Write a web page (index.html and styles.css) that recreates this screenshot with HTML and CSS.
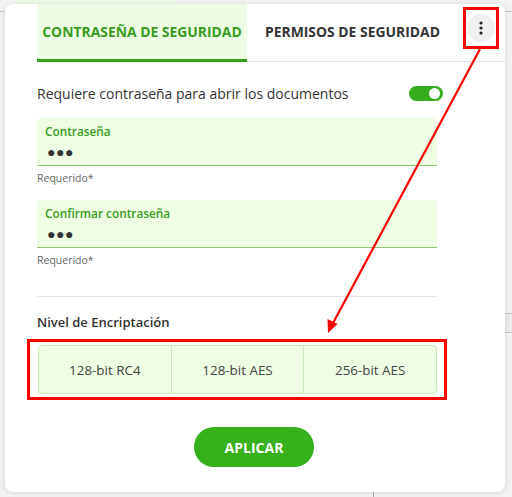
FILE: index.html
```html
<!DOCTYPE html>
<html lang="es">
<head>
    <meta charset="UTF-8">
    <meta name="viewport" content="width=device-width, initial-scale=1.0">
    <title>Seguridad del documento</title>
    <link rel="stylesheet" href="styles.css">
</head>
<body>
    <div class="backdrop">
        <div class="bg-chip"></div>
        <div class="bg-line bg-line-left"></div>
        <div class="bg-line bg-line-right"></div>
        <div class="bg-band"></div>
        <div class="bg-tick"></div>
    </div>

    <div class="card">
        <div class="tabs">
            <div class="tab active">CONTRASEÑA DE SEGURIDAD</div>
            <div class="tab">PERMISOS DE SEGURIDAD</div>
            <div class="menu-wrap">
                <button class="menu-btn" aria-label="Más opciones">
                    <svg width="4" height="14" viewBox="0 0 4 14">
                        <circle cx="2" cy="2" r="1.6" fill="#222"/>
                        <circle cx="2" cy="7" r="1.6" fill="#222"/>
                        <circle cx="2" cy="12" r="1.6" fill="#222"/>
                    </svg>
                </button>
            </div>
        </div>

        <div class="content">
            <div class="switch-row">
                <span>Requiere contraseña para abrir los documentos</span>
                <div class="switch"><div class="knob"></div></div>
            </div>

            <div class="field">
                <div class="field-box">
                    <div class="field-label">Contraseña</div>
                    <div class="field-value">●●●</div>
                </div>
                <div class="field-hint">Requerido*</div>
            </div>

            <div class="field">
                <div class="field-box">
                    <div class="field-label">Confirmar contraseña</div>
                    <div class="field-value">●●●</div>
                </div>
                <div class="field-hint">Requerido*</div>
            </div>

            <hr class="divider">

            <h3>Nivel de Encriptación</h3>
            <div class="segments-wrap">
                <div class="segments">
                    <div class="segment">128-bit RC4</div>
                    <div class="segment">128-bit AES</div>
                    <div class="segment">256-bit AES</div>
                </div>
            </div>

            <div class="actions">
                <button class="apply">APLICAR</button>
            </div>
        </div>
    </div>

    <!-- annotation arrow -->
    <svg class="annotation" width="512" height="497" viewBox="0 0 512 497">
        <line x1="480" y1="49" x2="332" y2="325" stroke="#ff0000" stroke-width="2.2"/>
        <polygon points="328,333 327.5,319 337.5,324" fill="#ff0000"/>
    </svg>
</body>
</html>
```

FILE: styles.css
```css
* {
    margin: 0;
    padding: 0;
    box-sizing: border-box;
}

body {
    font-family: 'Open Sans', 'Noto Sans', sans-serif;
    background-color: #f3f3f3;
    color: #333;
    width: 512px;
    height: 497px;
    overflow: hidden;
    position: relative;
}

/* Background page behind the dialog */
.backdrop {
    position: absolute;
    inset: 0;
}

.bg-chip {
    position: absolute;
    left: 14px;
    top: -12px;
    width: 162px;
    height: 17px;
    border-radius: 8px;
    background: #eefbe6;
}

.bg-line {
    position: absolute;
    height: 1px;
    background: #c4c4c4;
}

.bg-line-left {
    left: 0;
    top: 11px;
    width: 8px;
}

.bg-line-right {
    right: 0;
    top: 11px;
    width: 10px;
}

.bg-band {
    position: absolute;
    right: 0;
    top: 313px;
    width: 10px;
    height: 20px;
    border-top: 1px solid #c4c4c4;
    border-bottom: 1px solid #c4c4c4;
    background: #ececec;
}

.bg-tick {
    position: absolute;
    left: 373px;
    top: 490px;
    width: 1px;
    height: 10px;
    background: #aaa;
}

/* Dialog card */
.card {
    position: relative;
    margin: 4px 0 0 5px;
    width: 500px;
    height: 488px;
    background: #fff;
    border-radius: 8px;
    box-shadow: 0 1px 6px rgba(0, 0, 0, 0.12);
    display: flex;
    flex-direction: column;
}

.tabs {
    display: flex;
    align-items: stretch;
    margin-left: 32px;
    height: 58px;
    border-bottom: 1px solid #e2e2e2;
}

.tab {
    display: flex;
    align-items: center;
    justify-content: center;
    padding: 0 18px;
    font-size: 13.9px;
    font-weight: 700;
    color: #333;
    border-bottom: 3px solid transparent;
    margin-bottom: -1px;
    white-space: nowrap;
}

.tab.active {
    width: 210px;
    padding: 0;
    background: #eefce5;
    color: #3a9c1f;
    border-bottom-color: #36a01d;
}

.menu-wrap {
    margin-left: auto;
    align-self: flex-start;
    margin-top: 3px;
    margin-right: 6px;
    width: 36px;
    height: 42px;
    border: 3px solid #ff0000;
    display: flex;
    align-items: center;
    justify-content: center;
}

.menu-btn {
    width: 28px;
    height: 28px;
    border-radius: 50%;
    border: none;
    background: #f0f0f0;
    display: flex;
    align-items: center;
    justify-content: center;
}

.content {
    padding: 0 68px 0 32px;
    display: flex;
    flex-direction: column;
}

.switch-row {
    display: flex;
    align-items: center;
    justify-content: space-between;
    height: 56px;
    padding-top: 6px;
    font-size: 14px;
    color: #333;
}

.switch {
    width: 34px;
    height: 15px;
    border-radius: 8px;
    background: #36ad1c;
    margin-right: -6px;
    position: relative;
}

.knob {
    position: absolute;
    right: 3px;
    top: 2px;
    width: 11px;
    height: 11px;
    border-radius: 50%;
    background: #fff;
}

.field {
    margin-bottom: 14px;
}

.field-box {
    height: 48px;
    background: #eefde4;
    border-radius: 4px 4px 0 0;
    border-bottom: 1px solid #8cc872;
    padding: 4px 8px 0;
}

.field-label {
    font-size: 11.8px;
    font-weight: 600;
    color: #3a9c1f;
    line-height: 18px;
}

.field-value {
    font-size: 14px;
    color: #333;
    letter-spacing: 0.5px;
    line-height: 22px;
    margin-top: 1px;
    padding-left: 2px;
}

.field-hint {
    font-size: 10.5px;
    color: #666;
    line-height: 16px;
    margin-top: 4px;
}

.divider {
    border: none;
    border-top: 1px solid #e2e2e2;
    margin-top: 14px;
}

h3 {
    font-size: 13px;
    font-weight: 600;
    color: #333;
    margin-top: 14px;
    line-height: 22px;
}

.segments-wrap {
    margin: 6px -10px 0;
    border: 3px solid #ff0000;
    padding: 3px 7px 3px 8px;
}

.segments {
    display: flex;
    height: 49px;
    background: #eefde4;
    border: 1px solid #c9eab9;
    border-radius: 4px;
}

.segment {
    flex: 1;
    display: flex;
    align-items: center;
    justify-content: center;
    font-size: 13.4px;
    color: #444;
}

.segment + .segment {
    border-left: 1px solid #c9eab9;
}

.actions {
    display: flex;
    justify-content: center;
    padding-left: 34px;
    margin-top: 27px;
}

.apply {
    width: 120px;
    height: 40px;
    border: none;
    border-radius: 20px;
    background: #36b01b;
    color: #fff;
    font-family: inherit;
    font-size: 14px;
    font-weight: 700;
}

/* Annotation overlay */
.annotation {
    position: absolute;
    left: 0;
    top: 0;
    pointer-events: none;
}
```
